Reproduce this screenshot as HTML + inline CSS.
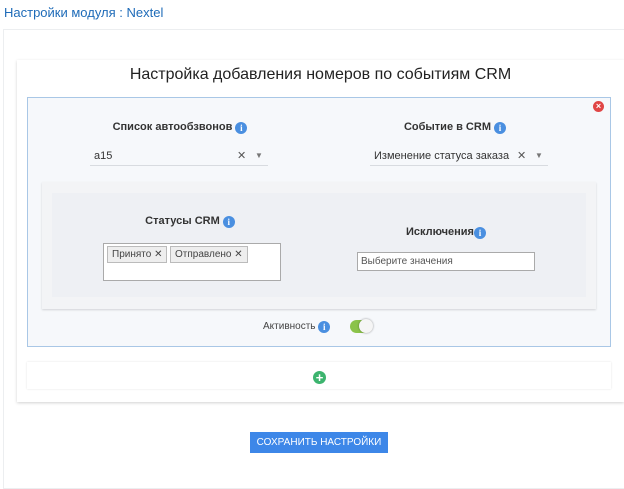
<!DOCTYPE html>
<html><head><meta charset="utf-8"><style>
*{box-sizing:border-box;margin:0;padding:0}
body{width:624px;height:458px;background:#fff;font-family:"Liberation Sans","Noto Sans CJK SC",sans-serif;position:relative;overflow:hidden;color:#333}
.a{position:absolute}
.info{display:inline-block;width:12px;height:12px;border-radius:50%;background:#4a8fe0;color:#fff;font:bold 9px/12px "Liberation Serif",serif;text-align:center;vertical-align:-1px}
.lbl{font-weight:bold;font-size:11px;color:#333;text-align:center}
.sel{border-bottom:1px solid #d8dbe0;font-size:11px;height:18px;line-height:16px;padding-left:4px}
.tag{position:absolute;top:2px;height:17px;border:1px solid #bbb;background:#eee;font-size:10px;line-height:15px;padding:0 4px;color:#444}
</style></head><body>
<div class="a" style="left:4px;top:5px;font-size:13px;color:#1e6bb8">Настройки модуля : Nextel</div>
<div class="a" style="left:3px;top:29px;width:630px;height:460px;border:1px solid #eceef0;background:#fff"></div>
<div class="a" style="left:17px;top:60px;width:607px;height:342px;background:#fff;box-shadow:0 1px 3px rgba(0,0,0,.18)"></div>
<div class="a" style="left:17px;top:66px;width:607px;text-align:center;font-size:16px;color:#222">Настройка добавления номеров по событиям CRM</div>
<div class="a" style="left:27px;top:97px;width:584px;height:250px;background:#f6f8fb;border:1px solid #a9c7e6"></div>
<div class="a" style="left:593px;top:101px;width:11px;height:11px;border-radius:50%;background:#e04545;color:#fff;font:bold 9px/11px 'Liberation Sans',sans-serif;text-align:center">×</div>
<div class="a lbl" style="left:90px;top:121px;width:180px">Список автообзвонов <span class="info">i</span></div>
<div class="a lbl" style="left:360px;top:121px;width:190px">Событие в CRM <span class="info">i</span></div>
<div class="a sel" style="left:90px;top:148px;width:178px">a15<span style="position:absolute;left:147px;color:#555">✕</span><span style="position:absolute;left:165px;color:#777;font-size:8px">▼</span></div>
<div class="a sel" style="left:370px;top:148px;width:178px">Изменение статуса заказа<span style="position:absolute;left:147px;color:#555">✕</span><span style="position:absolute;left:165px;color:#777;font-size:8px">▼</span></div>
<div class="a" style="left:42px;top:182px;width:554px;height:127px;background:#f3f4f6;box-shadow:0 1px 2px rgba(0,0,0,.15)"></div>
<div class="a" style="left:52px;top:193px;width:534px;height:104px;background:#eef0f4"></div>
<div class="a lbl" style="left:100px;top:215px;width:180px">Статусы CRM <span class="info">i</span></div>
<div class="a" style="left:103px;top:243px;width:178px;height:38px;background:#fff;border:1px solid #aaa">
<div class="tag" style="left:3px">Принято ✕</div><div class="tag" style="left:66px">Отправлено ✕</div></div>
<div class="a lbl" style="left:357px;top:226px;width:178px">Исключения<span class="info">i</span></div>
<div class="a" style="left:357px;top:252px;width:178px;height:19px;background:#fff;border:1px solid #aaa;font-size:10px;line-height:17px;padding-left:3px;color:#555">Выберите значения</div>
<div class="a" style="left:263px;top:321px;font-size:10px;color:#444">Активность <span class="info">i</span></div>
<div class="a" style="left:350px;top:320px;width:22px;height:13px;border-radius:7px;background:#8bc34a"></div>
<div class="a" style="left:359px;top:319px;width:14px;height:14px;border-radius:50%;background:#f5f5f5;box-shadow:0 0 2px rgba(0,0,0,.4)"></div>
<div class="a" style="left:27px;top:362px;width:584px;height:27px;background:#fff;box-shadow:0 0 2px rgba(0,0,0,.12)"></div>
<div class="a" style="left:313px;top:371px;width:13px;height:13px;border-radius:50%;background:#3cb46e;color:#fff;font:bold 13px/13px 'Liberation Sans',sans-serif;text-align:center">+</div>
<div class="a" style="left:250px;top:432px;width:138px;height:21px;background:#3d87e8;color:#fff;font-size:10px;line-height:21px;text-align:center">СОХРАНИТЬ НАСТРОЙКИ</div>
</body></html>
